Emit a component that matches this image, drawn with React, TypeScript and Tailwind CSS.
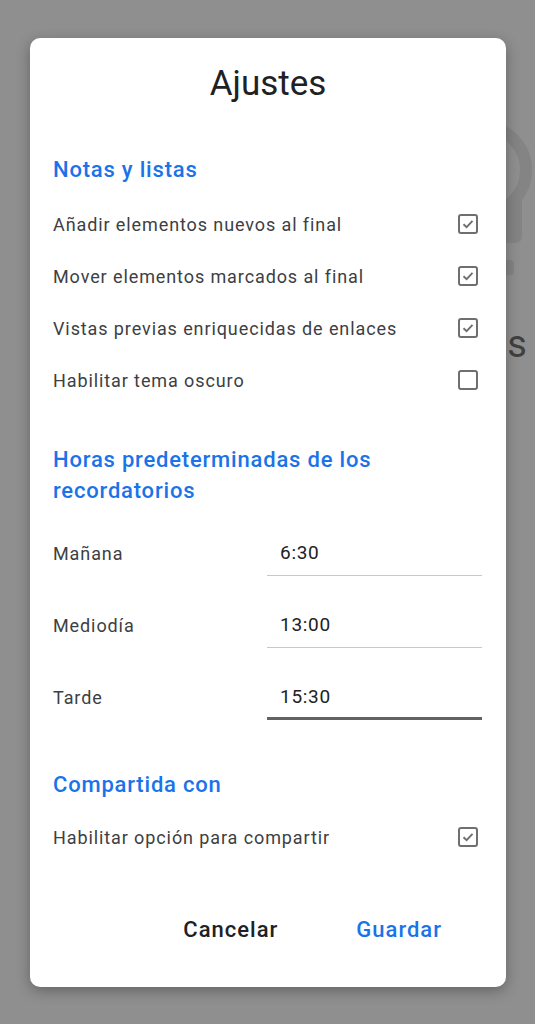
import React from "react";

function Check({ checked }: { checked: boolean }) {
  return (
    <div className="w-[20px] h-[20px] rounded-[3px] border-2 border-[#6f6f6f] flex items-center justify-center">
      {checked && (
        <svg width="14" height="14" viewBox="0 0 14 14">
          <path d="M2.5 7.2 L5.6 10.2 L11.5 3.8" fill="none" stroke="#6f6f6f" strokeWidth="1.9" />
        </svg>
      )}
    </div>
  );
}

function CheckRow({ label, checked }: { label: string; checked: boolean }) {
  return (
    <div className="h-[52px] flex items-center justify-between">
      <span className="text-[18px] tracking-[0.9px] text-[#3c4043]">{label}</span>
      <Check checked={checked} />
    </div>
  );
}

function TimeRow({ label, value, active }: { label: string; value: string; active?: boolean }) {
  return (
    <div className="flex items-stretch h-[46px] -mr-[4px]">
      <div className="w-[214px] shrink-0 flex items-center text-[18px] tracking-[0.9px] text-[#3c4043]">{label}</div>
      <div
        className={
          active
            ? "w-[215px] shrink-0 flex items-center pl-[13px] pt-[3px] text-[19px] tracking-[0.7px] text-[#202124] border-b-[3px] border-[#626262]"
            : "w-[215px] shrink-0 flex items-center pl-[13px] pt-[1px] text-[19px] tracking-[0.7px] text-[#202124] border-b border-[#c8c8c8]"
        }
      >
        {value}
      </div>
    </div>
  );
}

export default function App() {
  return (
    <div
      className="relative w-[535px] h-[1024px] overflow-hidden bg-[#8f8f8f]"
      style={{ fontFamily: "Roboto, 'Liberation Sans', sans-serif" }}
    >
      {/* background canvas content behind the dialog */}
      <svg className="absolute left-0 top-0" width="535" height="300" viewBox="0 0 535 300">
        <circle cx="482" cy="170" r="44" fill="none" stroke="#848484" strokeWidth="12" />
        <path d="M446 200 H522 V236 Q522 243 515 243 H453 Q446 243 446 236 Z" fill="#848484" />
        <rect x="452" y="260" width="62" height="15" rx="4" fill="#848484" />
      </svg>
      <div className="absolute right-[8px] top-[325px] text-[38px] leading-none text-[#404040]">as</div>

      <div className="absolute left-[30px] top-[38px] w-[476px] h-[949px] bg-white rounded-[10px] shadow-[0_4px_14px_rgba(0,0,0,0.3)] pl-[23px] pr-[28px] pt-[26px] flex flex-col">
        <div className="text-[35px] leading-[40px] text-center text-[#202124] pl-[5px]">Ajustes</div>

        <div className="mt-[52px] text-[22px] leading-[28px] tracking-[0.8px] font-medium text-[#1a73e8]">Notas y listas</div>
        <div className="mt-[14px] flex flex-col">
          <CheckRow label="Añadir elementos nuevos al final" checked />
          <CheckRow label="Mover elementos marcados al final" checked />
          <CheckRow label="Vistas previas enriquecidas de enlaces" checked />
          <CheckRow label="Habilitar tema oscuro" checked={false} />
        </div>

        <div className="mt-[38px] text-[22px] leading-[31px] tracking-[0.8px] font-medium text-[#1a73e8] pr-[40px]">
          Horas predeterminadas de los recordatorios
        </div>
        <div className="mt-[24px] flex flex-col gap-[26px]">
          <TimeRow label="Mañana" value="6:30" />
          <TimeRow label="Mediodía" value="13:00" />
          <TimeRow label="Tarde" value="15:30" active />
        </div>

        <div className="mt-[51px] text-[22px] leading-[28px] tracking-[0.8px] font-medium text-[#1a73e8]">Compartida con</div>
        <div className="mt-[12px]">
          <CheckRow label="Habilitar opción para compartir" checked />
        </div>

        <div className="mt-[46px] h-[40px] flex items-center justify-end gap-[78px] pr-[36px] text-[22px] tracking-[1px] font-medium">
          <span className="text-[#202124]">Cancelar</span>
          <span className="text-[#1a73e8]">Guardar</span>
        </div>
      </div>
    </div>
  );
}
